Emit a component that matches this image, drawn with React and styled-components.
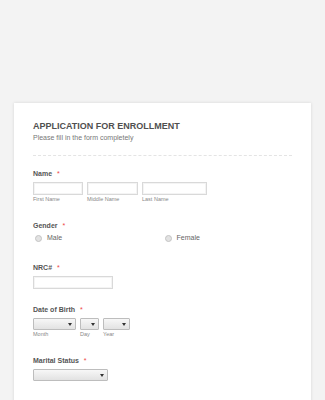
import styled, { createGlobalStyle } from 'styled-components';

const GlobalStyle = createGlobalStyle`
  html, body {
    margin: 0;
    padding: 0;
    background: #f3f3f3;
    font-family: "Liberation Sans", Arial, sans-serif;
  }
`;

function App() {
  return (
    <>
      <GlobalStyle />
      <Page>
        <Card>
          <Header>
            <Title>APPLICATION FOR ENROLLMENT</Title>
            <Subtitle>Please fill in the form completely</Subtitle>
          </Header>

          <Field $top={13}>
            <Label>Name <Req>*</Req></Label>
            <Row>
              <Sub>
                <TextInput $w={50} />
                <SubLabel>First Name</SubLabel>
              </Sub>
              <Sub>
                <TextInput $w={51} />
                <SubLabel>Middle Name</SubLabel>
              </Sub>
              <Sub>
                <TextInput $w={65} />
                <SubLabel>Last Name</SubLabel>
              </Sub>
            </Row>
          </Field>

          <Field $top={18}>
            <Label>Gender <Req>*</Req></Label>
            <Radios>
              <Option><Radio />Male</Option>
              <Option><Radio />Female</Option>
            </Radios>
          </Field>

          <Field $top={19}>
            <Label>NRC# <Req>*</Req></Label>
            <TextInput $w={80} />
          </Field>

          <Field $top={16}>
            <Label>Date of Birth <Req>*</Req></Label>
            <Row>
              <Sub>
                <Select $w={43} />
                <SubLabel>Month</SubLabel>
              </Sub>
              <Sub>
                <Select $w={19} />
                <SubLabel>Day</SubLabel>
              </Sub>
              <Sub>
                <Select $w={27} />
                <SubLabel>Year</SubLabel>
              </Sub>
            </Row>
          </Field>

          <Field>
            <Label>Marital Status <Req>*</Req></Label>
            <Select $w={75} />
          </Field>

          <Field $top={17}>
            <Label>Current Address <Req>*</Req></Label>
            <TextInput $w={200} />
          </Field>
        </Card>
      </Page>
    </>
  );
}

export default App;

// STYLES
const Page = styled.div`
  padding: 103px 14px 0;
  height: 400px;
  box-sizing: border-box;
  overflow: hidden;
`;

const Card = styled.div`
  background: #fff;
  box-shadow: 0 0 3px rgba(0, 0, 0, 0.12);
  padding: 18px 19px 40px;
  min-height: 320px;
`;

const Header = styled.div`
  border-bottom: 1px dashed #e4e4e4;
  padding-bottom: 12px;
`;

const Title = styled.div`
  font-size: 9px;
  line-height: 11px;
  font-weight: bold;
  color: #505050;
`;

const Subtitle = styled.div`
  font-size: 7px;
  line-height: 10px;
  color: #777;
  margin-top: 1px;
`;

const Field = styled.div`
  margin-top: ${(p) => p.$top ?? 18}px;
`;

const Label = styled.div`
  font-size: 7px;
  line-height: 10px;
  font-weight: bold;
  color: #555;
  margin-bottom: 3px;
`;

const Req = styled.span`
  color: #e44;
  font-weight: normal;
  margin-left: 3px;
`;

const Row = styled.div`
  display: flex;
  gap: 4px;
`;

const Sub = styled.div`
  display: flex;
  flex-direction: column;
`;

const SubLabel = styled.div`
  font-size: 5.5px;
  line-height: 8px;
  color: #888;
`;

const TextInput = styled.div`
  width: ${(p) => p.$w}px;
  height: 13px;
  box-sizing: border-box;
  border: 1px solid #d9d9d9;
  box-shadow: inset 0 0 0 1px #f4f4f4;
  background: #fff;
`;

const Select = styled.div`
  position: relative;
  width: ${(p) => p.$w}px;
  height: 12px;
  box-sizing: border-box;
  border: 1px solid #bdbdbd;
  border-radius: 1px;
  background: linear-gradient(#f7f7f7, #e2e2e2);

  &:after {
    content: '';
    position: absolute;
    right: 3px;
    top: 4px;
    border-left: 2px solid transparent;
    border-right: 2px solid transparent;
    border-top: 3px solid #333;
  }
`;

const Radios = styled.div`
  display: grid;
  grid-template-columns: 1fr 1fr;
  margin-top: -2px;
`;

const Option = styled.div`
  display: flex;
  align-items: center;
  gap: 5px;
  padding-left: 2px;
  font-size: 7px;
  line-height: 12px;
  color: #666;
`;

const Radio = styled.span`
  width: 5px;
  height: 5px;
  border-radius: 50%;
  border: 1px solid #c4c4c4;
  background: #e2e2e2;
`;
